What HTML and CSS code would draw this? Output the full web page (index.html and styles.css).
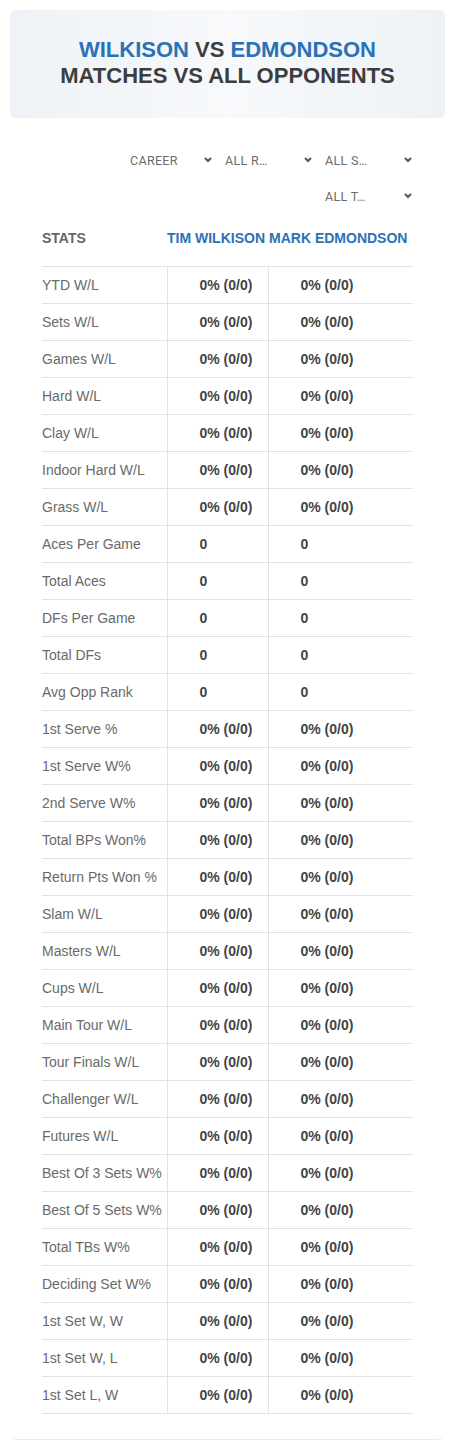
FILE: index.html
```html
<!DOCTYPE html>
<html lang="en">
<head>
    <meta charset="UTF-8">
    <meta name="viewport" content="width=device-width, initial-scale=1.0">
    <title>Wilkison vs Edmondson</title>
    <link rel="stylesheet" href="styles.css">
</head>
<body>
    <div class="page">
        <div class="title-card">
            <h1><span class="player">WILKISON</span> VS <span class="player">EDMONDSON</span></h1>
            <h2>MATCHES VS ALL OPPONENTS</h2>
        </div>

        <div class="stats-card">
            <div class="filters">
                <div class="select select-first">
                    <span class="select-label">CAREER</span>
                    <svg class="chevron" width="8" height="6" viewBox="0 0 8 6"><path d="M1 1l3 3 3-3" fill="none" stroke="#555" stroke-width="2"/></svg>
                </div>
                <div class="select">
                    <span class="select-label">ALL R…</span>
                    <svg class="chevron" width="8" height="6" viewBox="0 0 8 6"><path d="M1 1l3 3 3-3" fill="none" stroke="#555" stroke-width="2"/></svg>
                </div>
                <div class="select">
                    <span class="select-label">ALL S…</span>
                    <svg class="chevron" width="8" height="6" viewBox="0 0 8 6"><path d="M1 1l3 3 3-3" fill="none" stroke="#555" stroke-width="2"/></svg>
                </div>
                <div class="select">
                    <span class="select-label">ALL T…</span>
                    <svg class="chevron" width="8" height="6" viewBox="0 0 8 6"><path d="M1 1l3 3 3-3" fill="none" stroke="#555" stroke-width="2"/></svg>
                </div>
            </div>

            <table class="stats-table">
                <thead>
                    <tr>
                        <th class="stat-head">STATS</th>
                        <th class="player-head">TIM WILKISON</th>
                        <th class="player-head">MARK EDMONDSON</th>
                    </tr>
                </thead>
                <tbody>
                    <tr><td>YTD W/L</td><td>0% (0/0)</td><td>0% (0/0)</td></tr>
                    <tr><td>Sets W/L</td><td>0% (0/0)</td><td>0% (0/0)</td></tr>
                    <tr><td>Games W/L</td><td>0% (0/0)</td><td>0% (0/0)</td></tr>
                    <tr><td>Hard W/L</td><td>0% (0/0)</td><td>0% (0/0)</td></tr>
                    <tr><td>Clay W/L</td><td>0% (0/0)</td><td>0% (0/0)</td></tr>
                    <tr><td>Indoor Hard W/L</td><td>0% (0/0)</td><td>0% (0/0)</td></tr>
                    <tr><td>Grass W/L</td><td>0% (0/0)</td><td>0% (0/0)</td></tr>
                    <tr><td>Aces Per Game</td><td>0</td><td>0</td></tr>
                    <tr><td>Total Aces</td><td>0</td><td>0</td></tr>
                    <tr><td>DFs Per Game</td><td>0</td><td>0</td></tr>
                    <tr><td>Total DFs</td><td>0</td><td>0</td></tr>
                    <tr><td>Avg Opp Rank</td><td>0</td><td>0</td></tr>
                    <tr><td>1st Serve %</td><td>0% (0/0)</td><td>0% (0/0)</td></tr>
                    <tr><td>1st Serve W%</td><td>0% (0/0)</td><td>0% (0/0)</td></tr>
                    <tr><td>2nd Serve W%</td><td>0% (0/0)</td><td>0% (0/0)</td></tr>
                    <tr><td>Total BPs Won%</td><td>0% (0/0)</td><td>0% (0/0)</td></tr>
                    <tr><td>Return Pts Won %</td><td>0% (0/0)</td><td>0% (0/0)</td></tr>
                    <tr><td>Slam W/L</td><td>0% (0/0)</td><td>0% (0/0)</td></tr>
                    <tr><td>Masters W/L</td><td>0% (0/0)</td><td>0% (0/0)</td></tr>
                    <tr><td>Cups W/L</td><td>0% (0/0)</td><td>0% (0/0)</td></tr>
                    <tr><td>Main Tour W/L</td><td>0% (0/0)</td><td>0% (0/0)</td></tr>
                    <tr><td>Tour Finals W/L</td><td>0% (0/0)</td><td>0% (0/0)</td></tr>
                    <tr><td>Challenger W/L</td><td>0% (0/0)</td><td>0% (0/0)</td></tr>
                    <tr><td>Futures W/L</td><td>0% (0/0)</td><td>0% (0/0)</td></tr>
                    <tr><td>Best Of 3 Sets W%</td><td>0% (0/0)</td><td>0% (0/0)</td></tr>
                    <tr><td>Best Of 5 Sets W%</td><td>0% (0/0)</td><td>0% (0/0)</td></tr>
                    <tr><td>Total TBs W%</td><td>0% (0/0)</td><td>0% (0/0)</td></tr>
                    <tr><td>Deciding Set W%</td><td>0% (0/0)</td><td>0% (0/0)</td></tr>
                    <tr><td>1st Set W, W</td><td>0% (0/0)</td><td>0% (0/0)</td></tr>
                    <tr><td>1st Set W, L</td><td>0% (0/0)</td><td>0% (0/0)</td></tr>
                    <tr><td>1st Set L, W</td><td>0% (0/0)</td><td>0% (0/0)</td></tr>
                </tbody>
            </table>
        </div>
    </div>
</body>
</html>
```

FILE: styles.css
```css
body {
    margin: 0;
    padding: 0;
    background: white;
    font-family: "Liberation Sans", Arial, sans-serif;
}

.page {
    padding: 10px;
}

.title-card {
    background: linear-gradient(90deg, #eef2f6 0%, #f7f9fb 50%, #eef2f6 100%);
    border-radius: 6px;
    padding: 27px 10px 29px;
    text-align: center;
    color: #3d3d3d;
}

.title-card h1,
.title-card h2 {
    margin: 0;
    font-size: 22px;
    line-height: 26px;
    font-weight: bold;
}

.player {
    color: #2a72b5;
}

.stats-card {
    padding: 30px 32px 25px;
    border-bottom: 1px solid #ececec;
    border-radius: 0 0 8px 8px;
}

.filters {
    display: flex;
    flex-wrap: wrap;
    justify-content: flex-end;
    column-gap: 5px;
    row-gap: 12px;
    margin-right: -2px;
}

.select {
    width: 95px;
    height: 24px;
    box-sizing: border-box;
    padding: 0 3px 0 5px;
    display: flex;
    align-items: center;
    justify-content: space-between;
    font-family: Roboto, "Liberation Sans", sans-serif;
    font-size: 12.5px;
    letter-spacing: 0.3px;
    color: #6b6b6b;
}

.select-first {
    width: 90px;
}

.select-label {
    white-space: nowrap;
}

.chevron {
    flex-shrink: 0;
}

.stats-table {
    width: 100%;
    margin-top: 14px;
    border-collapse: collapse;
    font-size: 14px;
}

.stats-table th {
    padding: 8px 0 20px;
    line-height: 16px;
    text-align: left;
    font-weight: bold;
    white-space: nowrap;
    border-bottom: 1px solid #e2e2e2;
}

.stat-head {
    width: 125px;
    color: #666;
}

.player-head {
    color: #2a72b5;
}

.player-head:nth-child(2) {
    width: 101px;
}

.player-head:nth-child(3) {
    padding-left: 1px;
}

.stats-table td {
    height: 36px;
    padding: 0 0 0 32px;
    line-height: 16px;
    color: #444;
    font-weight: bold;
    border-bottom: 1px solid #e2e2e2;
    border-left: 1px solid #e2e2e2;
}

.stats-table td:first-child {
    padding-left: 0;
    border-left: none;
    color: #6a6a6a;
    font-weight: normal;
    white-space: nowrap;
}
```
